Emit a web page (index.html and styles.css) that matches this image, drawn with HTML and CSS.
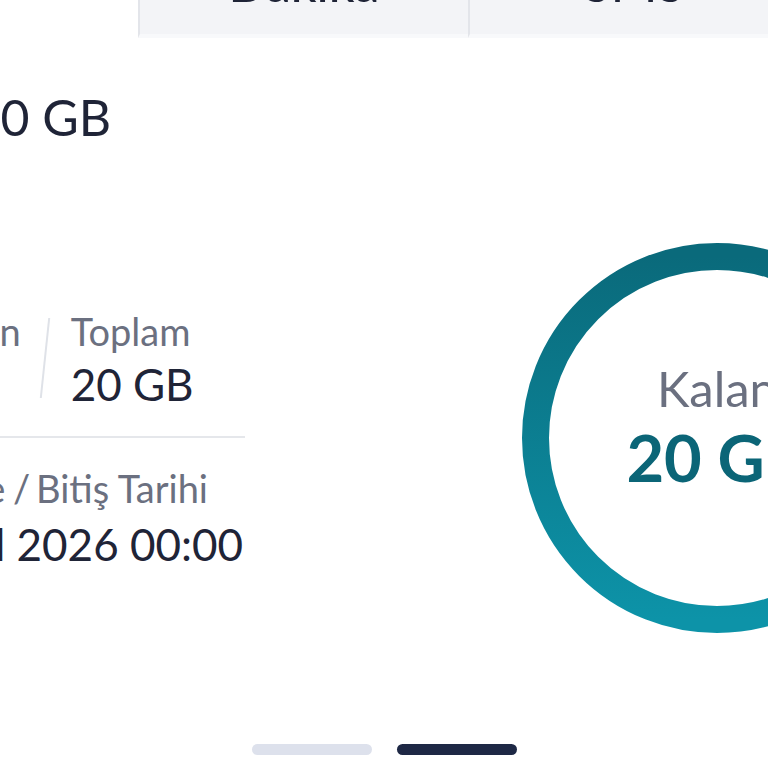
FILE: index.html
```html
<html>

<head>
	<title>
		İnternet Paketi
	</title>

	<link rel="stylesheet" href="styles.css">
</head>

<body>
	<div class="tabs">
		<div class="tab tab-active">İnternet</div>
		<div class="tab">Dakika</div>
		<div class="tab">SMS</div>
	</div>

	<div class="content">
		<div class="details">
			<div class="heading">Aylık 20 GB</div>

			<div class="stats">
				<div class="stat stat-used">
					<div class="label">Kullanılan</div>
					<div class="value">0 GB</div>
				</div>
				<div class="slash"></div>
				<div class="stat">
					<div class="label">Toplam</div>
					<div class="value">20 GB</div>
				</div>
			</div>

			<div class="separator"></div>

			<div class="dates">
				<div class="label"><span>Yenilenme <span class="label-slash">/</span> Bitiş Tarihi</span></div>
				<div class="value">30 Eylül 2026 00:00</div>
			</div>
		</div>

		<div class="gauge">
			<svg class="ring" width="390" height="390" viewBox="0 0 390 390">
				<defs>
					<linearGradient id="ring-gradient" x1="0" y1="0" x2="0" y2="1">
						<stop offset="0%" stop-color="#0a6a7b" />
						<stop offset="100%" stop-color="#0d93a8" />
					</linearGradient>
				</defs>
				<circle cx="195" cy="195" r="181.5" fill="none" stroke="url(#ring-gradient)" stroke-width="27" />
			</svg>
			<div class="gauge-text">
				<div class="gauge-label">Kalan</div>
				<div class="gauge-value">20 GB</div>
			</div>
		</div>
	</div>

	<div class="pager">
		<div class="pager-dot"></div>
		<div class="pager-dot pager-dot-active"></div>
	</div>
</body>

</html>
```

FILE: styles.css
```css
html,
body {
	margin: 0px;
	padding: 0px;
	width: 768px;
	height: 768px;
	overflow: hidden;
	background-color: #fff;
	font-family: Lato, "Noto Sans", sans-serif;
	color: #1f2437;
}

.tabs {
	display: flex;
	margin-top: -40px;
	margin-left: -362px;
	height: 78px;
}

.tab {
	flex: 0 0 330px;
	display: flex;
	align-items: center;
	justify-content: center;
	box-sizing: border-box;
	padding-bottom: 28px;
	font-size: 50px;
	font-weight: 500;
	background-color: #f3f4f7;
	border-left: 2px solid #e3e5ea;
	border-bottom: 4px solid #f8f9fb;
}

.tab-active {
	flex-basis: 500px;
	background-color: #fff;
	border-left: none;
	border-bottom: none;
}

.content {
	display: flex;
	margin-left: -130px;
	margin-top: 50px;
	width: 1100px;
}

.details {
	flex: 0 0 375px;
	min-width: 0px;
}

.heading {
	margin-left: -18px;
	font-size: 50px;
	line-height: 58px;
	white-space: nowrap;
}

.stats {
	display: flex;
	margin-top: 163px;
	margin-left: -11px;
}

.label {
	font-size: 38px;
	line-height: 44px;
	color: #6b7080;
	white-space: nowrap;
}

.value {
	margin-top: 3px;
	font-size: 44px;
	line-height: 56px;
	white-space: nowrap;
}

.slash {
	width: 2px;
	height: 80px;
	margin: 9px 25px 0px 23px;
	background-color: #dfe2e8;
	transform: skewX(-6deg);
}

.separator {
	margin-top: 24px;
	height: 2px;
	background-color: #e5e7eb;
}

.dates {
	margin-top: 28px;
}

.dates .label,
.dates .value {
	display: flex;
	justify-content: flex-end;
}

.dates .label {
	padding-right: 37px;
}

.label-slash {
	margin: 0px -4px 0px -2px;
}

.dates .value {
	margin-top: 6px;
	padding-right: 2px;
}

.gauge {
	position: relative;
	flex: 0 0 390px;
	height: 390px;
	margin-top: 155px;
	margin-left: 277px;
}

.ring {
	display: block;
}

.gauge-text {
	position: absolute;
	left: 0px;
	top: 0px;
	width: 100%;
	height: 100%;
	box-sizing: border-box;
	padding-bottom: 24px;
	display: flex;
	flex-direction: column;
	align-items: center;
	justify-content: center;
}

.gauge-label {
	font-size: 49px;
	line-height: 58px;
	color: #6b7080;
}

.gauge-value {
	margin-top: 4px;
	font-size: 65px;
	line-height: 72px;
	font-weight: 700;
	color: #0b6577;
}

.pager {
	display: flex;
	justify-content: center;
	gap: 25px;
	margin-top: 111px;
}

.pager-dot {
	width: 120px;
	height: 11px;
	border-radius: 6px;
	background-color: #dde1ec;
}

.pager-dot-active {
	background-color: #1e2845;
}
```
